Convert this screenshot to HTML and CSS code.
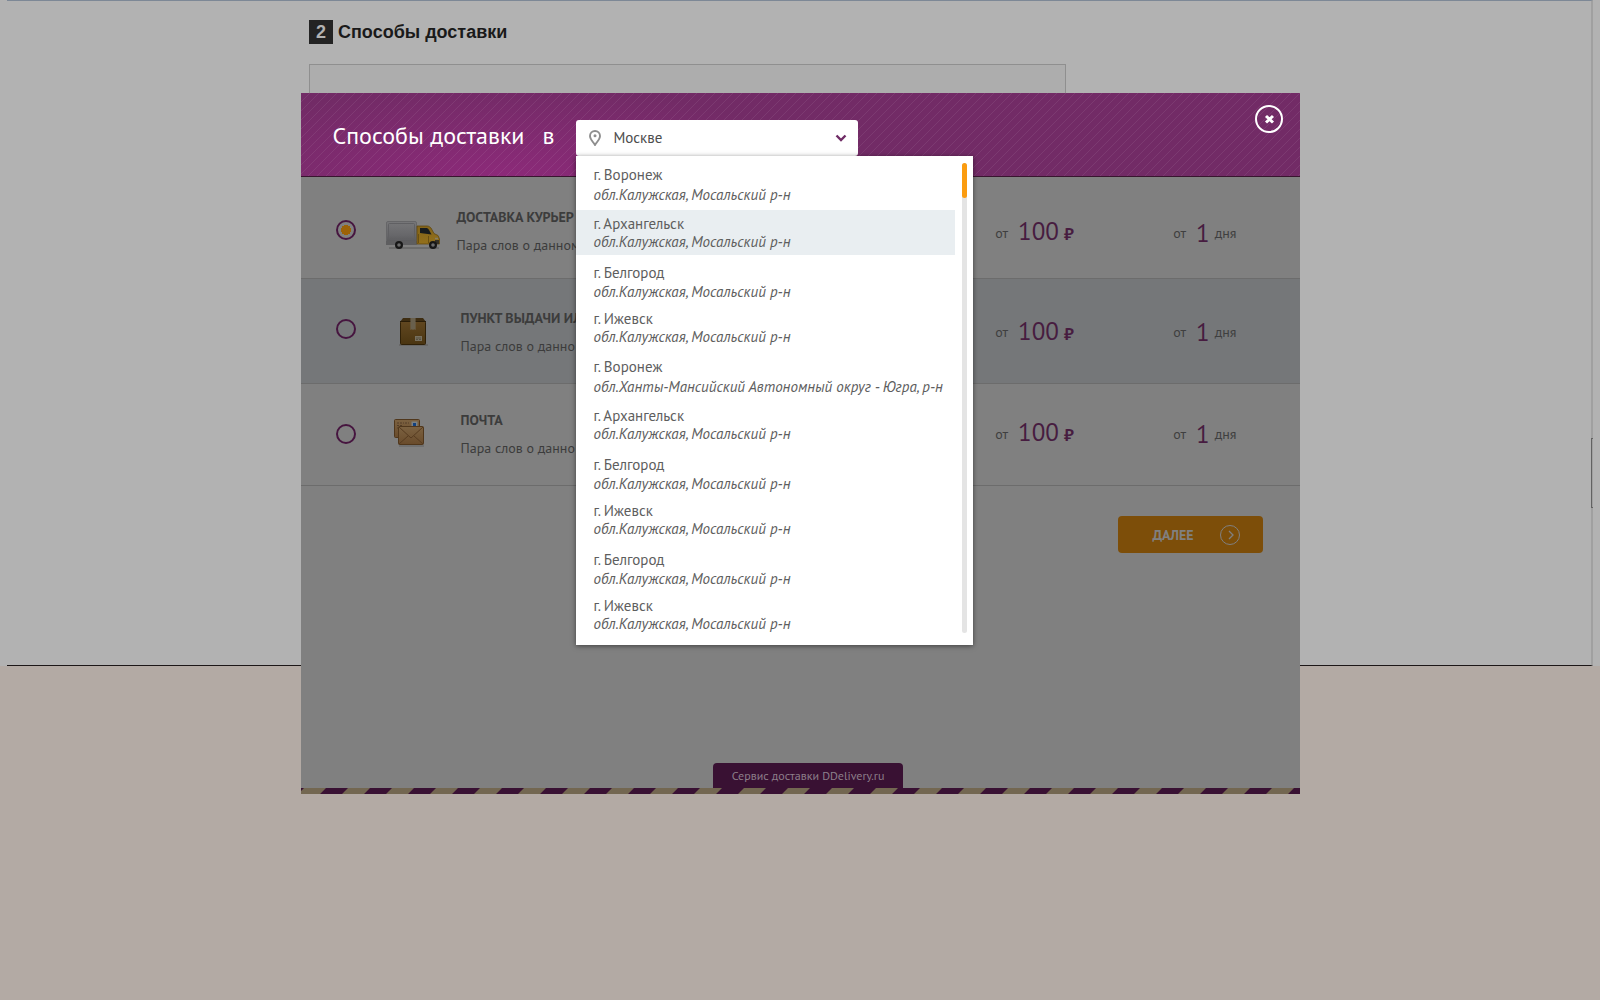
FILE: index.html
```html
<!DOCTYPE html>
<html lang="ru">
<head>
<meta charset="utf-8">
<meta name="viewport" content="width=device-width, initial-scale=1">
<title>Способы доставки</title>
<link rel="stylesheet" href="styles.css">
</head>
<body>
<main class="page">
  <div class="sheet">
    <section class="step">
      <h1 class="step-title"><span class="step-number">2</span>Способы доставки</h1>
      <div class="step-box"></div>
    </section>
    <span class="scroll-thumb"></span>
  </div>
</main>

<div class="overlay">
  <div class="modal" role="dialog" aria-labelledby="modal-title">
    <header class="modal-head">
      <h2 class="modal-title" id="modal-title">Способы доставки</h2>
      <label class="modal-in" for="city">в</label>
      <div class="city-field">
        <svg class="pin" viewBox="0 0 12 16" aria-hidden="true"><path d="M6 1C3.200 1 1 3.200 1 6c0 3.300 3.200 6 5 9 1.800-3 5-5.700 5-9 0-2.800-2.200-5-5-5z" fill="none" stroke="#8e8e8e" stroke-width="1.900"/><circle cx="6" cy="5.800" r="1.500" fill="#8e8e8e"/></svg>
        <select class="city-select" id="city"><option>Москве</option></select>
        <svg class="chevron" viewBox="0 0 12 8" aria-hidden="true"><path d="M1.500 1.500 6 6l4.500-4.500" fill="none" stroke="#702c66" stroke-width="2.400"/></svg>
        <div class="menu">
          <ul class="cities">
            <li class="city voronezh"><span>г. Воронеж</span><em>обл.Калужская, Мосальский р-н</em></li>
            <li class="city active"><span>г. Архангельск</span><em>обл.Калужская, Мосальский р-н</em></li>
            <li class="city belgorod"><span>г. Белгород</span><em>обл.Калужская, Мосальский р-н</em></li>
            <li class="city"><span>г. Ижевск</span><em>обл.Калужская, Мосальский р-н</em></li>
            <li class="city voronezh"><span>г. Воронеж</span><em>обл.Ханты-Мансийский Автономный округ - Югра, р-н</em></li>
            <li class="city arkhangelsk"><span>г. Архангельск</span><em>обл.Калужская, Мосальский р-н</em></li>
            <li class="city belgorod"><span>г. Белгород</span><em>обл.Калужская, Мосальский р-н</em></li>
            <li class="city"><span>г. Ижевск</span><em>обл.Калужская, Мосальский р-н</em></li>
            <li class="city belgorod"><span>г. Белгород</span><em>обл.Калужская, Мосальский р-н</em></li>
            <li class="city"><span>г. Ижевск</span><em>обл.Калужская, Мосальский р-н</em></li>
          </ul>
          <div class="track"><div class="thumb"></div></div>
        </div>
      </div>
      <button class="close" type="button" aria-label="Закрыть"><svg viewBox="0 0 28 28"><circle cx="14" cy="14" r="13" fill="none" stroke="#ffffff" stroke-width="2"/><path d="m11 11 7 6.500m0-6.500-7 6.500" stroke="#ffffff" stroke-width="3"/></svg></button>
    </header>

    <form class="options">
      <div class="option first">
        <input class="radio" type="radio" name="way" id="courier" checked>
        <svg class="icon" viewBox="0 -5 56 32" aria-hidden="true">
          <defs>
            <linearGradient id="van" x1="0" y1="0" x2="0" y2="1"><stop offset="0" stop-color="#777779"/><stop offset=".6" stop-color="#67676a"/><stop offset="1" stop-color="#555557"/></linearGradient>
            <linearGradient id="cab" x1="0" y1="0" x2="0" y2="1"><stop offset="0" stop-color="#83641a"/><stop offset="1" stop-color="#93701b"/></linearGradient>
            <linearGradient id="carton" x1="0" y1="0" x2="0" y2="1"><stop offset="0" stop-color="#614720"/><stop offset="1" stop-color="#4a3511"/></linearGradient>
            <linearGradient id="paper" x1="0" y1="0" x2="0" y2="1"><stop offset="0" stop-color="#7c6241"/><stop offset="1" stop-color="#694b2b"/></linearGradient>
          </defs>
          <path d="M4 29h50" stroke="#6c6c6c" stroke-width="2"/>
          <rect x="1.500" y="2.500" width="30" height="23" rx="1.500" fill="url(#van)" stroke="#666668"/>
          <rect x="3.500" y="4.500" width="26" height="16" rx="1" fill="none" stroke="#606063"/>
          <path d="M1 22h31v4H1z" fill="#5e5e60"/>
          <path d="M32 7h10c2 0 3 1 4 2l3 5.500 4 2 1.500 3.500v5H32z" fill="url(#cab)" stroke="#604710" stroke-width=".8"/>
          <path d="M35 9h6c1.500 0 2 .5 3 2l2.500 4.500L35 14z" fill="#181c1e"/>
          <path d="M33.500 15v9M43.500 17v7" stroke="#604710" stroke-width=".8"/>
          <path d="M50 21h4v4h-4z" fill="#353025"/><path d="M50 19.500h3" stroke="#857d67" stroke-width="1.500"/>
          <circle cx="14" cy="26" r="4" fill="#171717"/><circle cx="14" cy="26" r="1.800" fill="#6b6b6b"/>
          <circle cx="48" cy="26" r="4" fill="#171717"/><circle cx="48" cy="26" r="1.800" fill="#6b6b6b"/>
        </svg>
        <label class="about" for="courier"><strong>ДОСТАВКА КУРЬЕР</strong><span>Пара слов о данном</span></label>
        <span class="price"><small>от</small><b>100 <i>₽</i></b></span>
        <span class="days"><small>от</small><b>1</b><small>дня</small></span>
      </div>
      <div class="option shaded">
        <input class="radio" type="radio" name="way" id="pickup">
        <svg class="icon" viewBox="0 -3 56 32" aria-hidden="true">
          <path d="M14 29h29" stroke="#686868" stroke-width="2"/>
          <path d="M18 2h20l3 4H15z" fill="#3e2d12"/>
          <rect x="15.500" y="5.500" width="25" height="23" rx="1" fill="url(#carton)" stroke="#302108"/>
          <path d="M15 5.500h26" stroke="#2a1d08"/>
          <path d="M25.500 2h5v12l-1.500-1-1 1-1-1-1.500 1z" fill="#736a58"/><path d="M27 2v11M29 2v11" stroke="#564b37" stroke-width=".6"/>
          <rect x="30" y="20" width="7" height="5" fill="#77705f"/><path d="M31 22h5m-5 1.500h2m1 0h2" stroke="#494233" stroke-width=".7"/>
        </svg>
        <label class="about" for="pickup"><strong>ПУНКТ ВЫДАЧИ ИЛ</strong><span>Пара слов о данно</span></label>
        <span class="price"><small>от</small><b>100 <i>₽</i></b></span>
        <span class="days"><small>от</small><b>1</b><small>дня</small></span>
      </div>
      <div class="option last">
        <input class="radio" type="radio" name="way" id="post">
        <svg class="icon" viewBox="0 2 56 32" aria-hidden="true">
          <path d="M14 30h25" stroke="#707070" stroke-width="2"/>
          <rect x="9.500" y="3.500" width="25" height="18" rx="1" fill="url(#paper)" stroke="#50371c"/>
          <path d="M12 7h7m-7 2.500h5m-5 2.500h6M20 7h4" stroke="#493623" stroke-width=".8" stroke-dasharray="2 1"/>
          <path d="M26.500 5.500h6v6h-6z" fill="#7b8082"/><path d="M28 7h3v3h-3z" fill="#12417f"/>
          <rect x="13.500" y="10.500" width="25" height="18" rx="1" fill="url(#paper)" stroke="#50371c"/>
          <path d="m14 28 9-8m15 8-9-8M14 11l12 11 12-11" fill="none" stroke="#563b20"/>
        </svg>
        <label class="about" for="post"><strong>ПОЧТА</strong><span>Пара слов о данно</span></label>
        <span class="price"><small>от</small><b>100 <i>₽</i></b></span>
        <span class="days"><small>от</small><b>1</b><small>дня</small></span>
      </div>
      <div class="actions">
        <button class="next" type="button">ДАЛЕЕ<svg viewBox="0 0 20 20" aria-hidden="true"><circle cx="10" cy="10" r="9.500" fill="none" stroke="#808080"/><path d="m9 6 4 4-4 4" fill="none" stroke="#808080" stroke-width="1.300"/></svg></button>
      </div>
    </form>

    <footer class="modal-foot">
      <a class="service" href="#">Сервис доставки DDelivery.ru</a>
      <svg class="ribbon" aria-hidden="true"><defs><pattern id="stripes" width="44" height="6" patternUnits="userSpaceOnUse"><path d="M0 0h44v6H0z" fill="#736751"/><path d="M19 6 25 0h22l-6 6zM-25 6l6-6H3l-6 6z" fill="#391133"/></pattern></defs><rect width="100%" height="6" fill="url(#stripes)"/></svg>
    </footer>
  </div>
</div>
</body>
</html>
```
FILE: styles.css
```css
* { box-sizing: border-box; }

body {
  margin: 0;
  min-height: 100vh;
  background: #b3aaa4;
  color: #3c3c3c;
  font: 14px/20px "PT Sans", "Open Sans", "Noto Sans", sans-serif;
}

.page { background: #b2b2b2; padding: 0 7px; }

.sheet {
  position: relative;
  min-height: 666px;
  border-top: 1px solid #7d8896;
  border-right: 2px solid #a0a0a0;
  border-bottom: 1px solid #1c1717;
}

.scroll-thumb {
  position: absolute;
  top: 437px;
  right: -2px;
  width: 2px;
  height: 70px;
  border: 1px solid #626262;
  border-right: 0;
}

.step { max-width: 980px; margin: 0 auto; padding-top: 19px; }

.step-title {
  display: flex;
  align-items: center;
  gap: 5px;
  margin: 0 0 20px;
  color: #1a1a1a;
  font: bold 18px/24px "Liberation Sans", Arial, sans-serif;
}

.step-number { width: 24px; background: #232323; color: #b2b2b2; text-align: center; }

.step-box { max-width: 757px; height: 400px; border: 1px solid #8f8f8f; background: #adadad; }

/* Dialog */
.overlay {
  position: absolute;
  top: 93px;
  left: 0;
  right: 0;
  display: flex;
  justify-content: center;
}

.modal {
  display: flex;
  flex-direction: column;
  width: 999px;
  max-width: 100%;
  min-height: 701px;
  background: #808080;
}

.modal-head {
  display: flex;
  align-items: flex-start;
  padding: 27px 17px 20px 32px;
  border-bottom: 1px solid #38152f;
  background:
    linear-gradient(135deg, transparent 46%, rgba(255, 255, 255, .07) 46%, rgba(255, 255, 255, .07) 54%, transparent 54%) 0 0 / 9px 9px,
    radial-gradient(ellipse 320px 90px at 20% 100%, #8c2a79, #722b66);
}

.modal-title, .modal-in { margin: 0; color: #ffffff; font-size: 24px; font-weight: 400; line-height: 32px; }
.modal-in { margin: 0 22px 0 18px; }

.city-field {
  position: relative;
  display: flex;
  align-items: center;
  width: 282px;
  height: 36px;
  padding: 0 11px 0 13px;
  border-radius: 3px;
  background: #ffffff;
}

.pin { width: 12px; height: 16px; }
.chevron { width: 12px; height: 8px; }

.city-select {
  flex: 1;
  appearance: none;
  border: 0;
  padding: 0 12px;
  background: none;
  color: #4d4d4d;
  font: 15px/24px "PT Sans", "Open Sans", "Noto Sans", sans-serif;
}

.menu {
  position: absolute;
  z-index: 1;
  top: 36px;
  left: 0;
  display: flex;
  width: 397px;
  padding: 5px 6px 12px 0;
  background: #ffffff;
  box-shadow: 0 1px 5px rgba(0, 0, 0, .5);
}

.cities { flex: 1; min-width: 0; margin: 0; padding: 0; list-style: none; }

.city {
  display: flex;
  flex-direction: column;
  padding: 5px 0 4px 17px;
  color: #5e5e5e;
  font-size: 15px;
  line-height: 18px;
  white-space: nowrap;
}

.city:last-child { padding-bottom: 0; }
.voronezh { gap: 2px; margin-top: 3px; }
.voronezh:first-child { margin-top: 0; }
.belgorod { gap: 1px; margin-top: 4px; }
.arkhangelsk, .active { margin-top: 2px; }
.active { background: #e9eef1; }

.track { width: 5px; margin: 2px 0 0 7px; border-radius: 3px; background: #e4e4e4; }
.thumb { height: 35px; border-radius: 3px; background: #fb9c10; }

.close { width: 28px; height: 28px; margin: -15px 0 0 auto; padding: 0; border: 0; background: none; }
.close svg { display: block; }

/* Delivery options */
.options { flex: 1; }

.option {
  display: flex;
  align-items: center;
  min-height: 102px;
  padding: 0 63px 0 35px;
  border-bottom: 1px solid #6c6c6c;
}

.first { padding-top: 4px; }
.shaded { min-height: 105px; padding-bottom: 4px; background: #757779; }
.last { padding-bottom: 2px; }

.radio {
  appearance: none;
  width: 20px;
  height: 20px;
  margin: 0;
  border: 2px solid #46153f;
  border-radius: 50%;
}

.radio:checked { background: radial-gradient(circle, #9c6208 5px, transparent 5px); }

.icon { width: 56px; height: 32px; margin: 0 20px 0 29px; overflow: visible; }
.first .icon { margin-right: 16px; }

.about {
  display: flex;
  flex-direction: column;
  gap: 8px;
  width: 116px;
  margin-right: auto;
  font-size: 14px;
  white-space: nowrap;
}
.first .about { width: 120px; padding-top: 2px; }

.price, .days { display: flex; align-items: center; color: #471c40; }
.first .price, .first .days { padding-top: 6px; }
.shaded .about, .shaded .price, .shaded .days { padding-top: 6px; }
.price { width: 178px; }
.price small, .days small { color: #3f3f3f; font-size: 14px; }
.price b, .days b { margin: 0 5px 0 10px; font-size: 25px; font-weight: 400; line-height: 32px; }
.price i { margin-left: -2px; font-size: 18px; font-style: normal; font-weight: 700; }

.actions { display: flex; justify-content: flex-end; padding: 30px 37px; }

.next {
  display: flex;
  align-items: center;
  justify-content: flex-end;
  gap: 26px;
  width: 145px;
  height: 37px;
  padding: 0 23px;
  border: 0;
  border-radius: 4px;
  background: #7d4e09;
  color: #808080;
  font: bold 14px/20px "PT Sans", "Open Sans", "Noto Sans", sans-serif;
}

.next svg { width: 20px; height: 20px; }

.modal-foot { display: flex; flex-direction: column; align-items: center; }

.service {
  margin-left: 16px;
  padding: 3px 19px 2px;
  border-radius: 4px 4px 0 0;
  background: #391133;
  color: #8c7f8a;
  font-size: 12px;
  text-decoration: none;
}

.ribbon { display: block; width: 100%; height: 6px; }
```
